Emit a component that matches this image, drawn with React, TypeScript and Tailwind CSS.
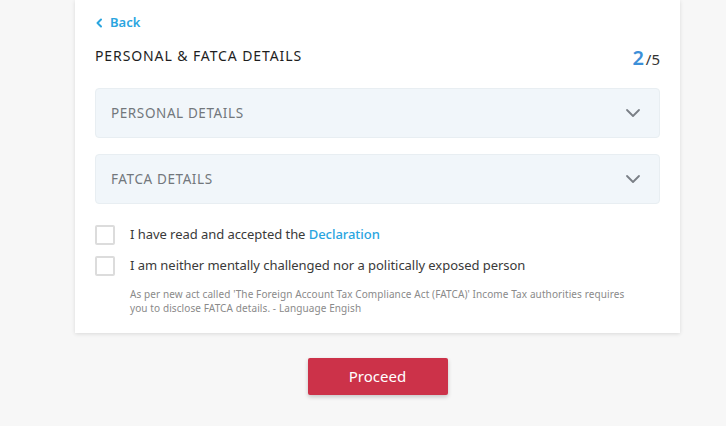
import React from "react";

const font = { fontFamily: '"Noto Sans", "Open Sans", sans-serif' };

function Chevron() {
  return (
    <svg width="16" height="10" viewBox="0 0 16 10" fill="none">
      <path d="M2 2l6 6 6-6" stroke="#7a7f86" strokeWidth="1.8" strokeLinecap="round" strokeLinejoin="round" />
    </svg>
  );
}

function Accordion({ title }: { title: string }) {
  return (
    <div className="h-[50px] flex items-center justify-between pl-[15px] pr-[18px] bg-[#f1f6fa] border border-[#e8eef2] rounded-[4px]">
      <span className="text-[13.5px] text-[#72777c] tracking-[0.6px]">{title}</span>
      <Chevron />
    </div>
  );
}

function Check({ children }: { children: React.ReactNode }) {
  return (
    <div className="flex items-center h-[20px]">
      <div className="w-[20px] h-[20px] border-2 border-[#dcdcdc] rounded-[2px] bg-white shrink-0" />
      <span className="ml-[15px] text-[13px] text-[#3a3a3a] tracking-[-0.05px]">{children}</span>
    </div>
  );
}

export default function App() {
  return (
    <div className="min-h-[426px] bg-[#f7f7f7] pb-[30px]" style={font}>
      <div className="ml-[75px] w-[605px] bg-white shadow-[0_1px_4px_rgba(0,0,0,0.12)] px-[20px] pt-[13px] pb-[18px]">
        <div className="flex items-center h-[20px] text-[#2aa5df] text-[13px] font-semibold gap-[7px]">
          <svg width="8" height="10" viewBox="0 0 8 10" fill="none">
            <path d="M6 1.5L2.5 5 6 8.5" stroke="#2aa5df" strokeWidth="2" strokeLinecap="round" strokeLinejoin="round" />
          </svg>
          <span>Back</span>
        </div>
        <div className="flex items-end justify-between mt-[9px] h-[26px]">
          <span className="text-[14px] text-[#1e1e1e] tracking-[0.9px] pb-[2px]">PERSONAL &amp; FATCA DETAILS</span>
          <span className="flex items-baseline">
            <span className="text-[20px] text-[#3c8fd8] font-semibold leading-none">2</span>
            <span className="text-[15px] text-[#333] ml-[2px] leading-none">/5</span>
          </span>
        </div>
        <div className="mt-[20px] flex flex-col gap-[16px]">
          <Accordion title="PERSONAL DETAILS" />
          <Accordion title="FATCA DETAILS" />
        </div>
        <div className="mt-[21px] flex flex-col gap-[11px]">
          <Check>
            I have read and accepted the <span className="text-[#2aa5df] font-medium">Declaration</span>
          </Check>
          <Check>I am neither mentally challenged nor a politically exposed person</Check>
        </div>
        <p className="mt-[11px] ml-[35px] text-[10px] leading-[14px] text-[#8a8a8a] tracking-[0.1px]">
          As per new act called 'The Foreign Account Tax Compliance Act (FATCA)' Income Tax authorities requires
          <br />
          you to disclose FATCA details. - Language Engish
        </p>
      </div>
      <div className="ml-[75px] w-[605px] flex justify-center mt-[25px]">
        <button className="w-[140px] h-[37px] bg-[#cc3249] text-white text-[15px] rounded-[2px] shadow-[0_2px_4px_rgba(0,0,0,0.2)]">
          Proceed
        </button>
      </div>
    </div>
  );
}
